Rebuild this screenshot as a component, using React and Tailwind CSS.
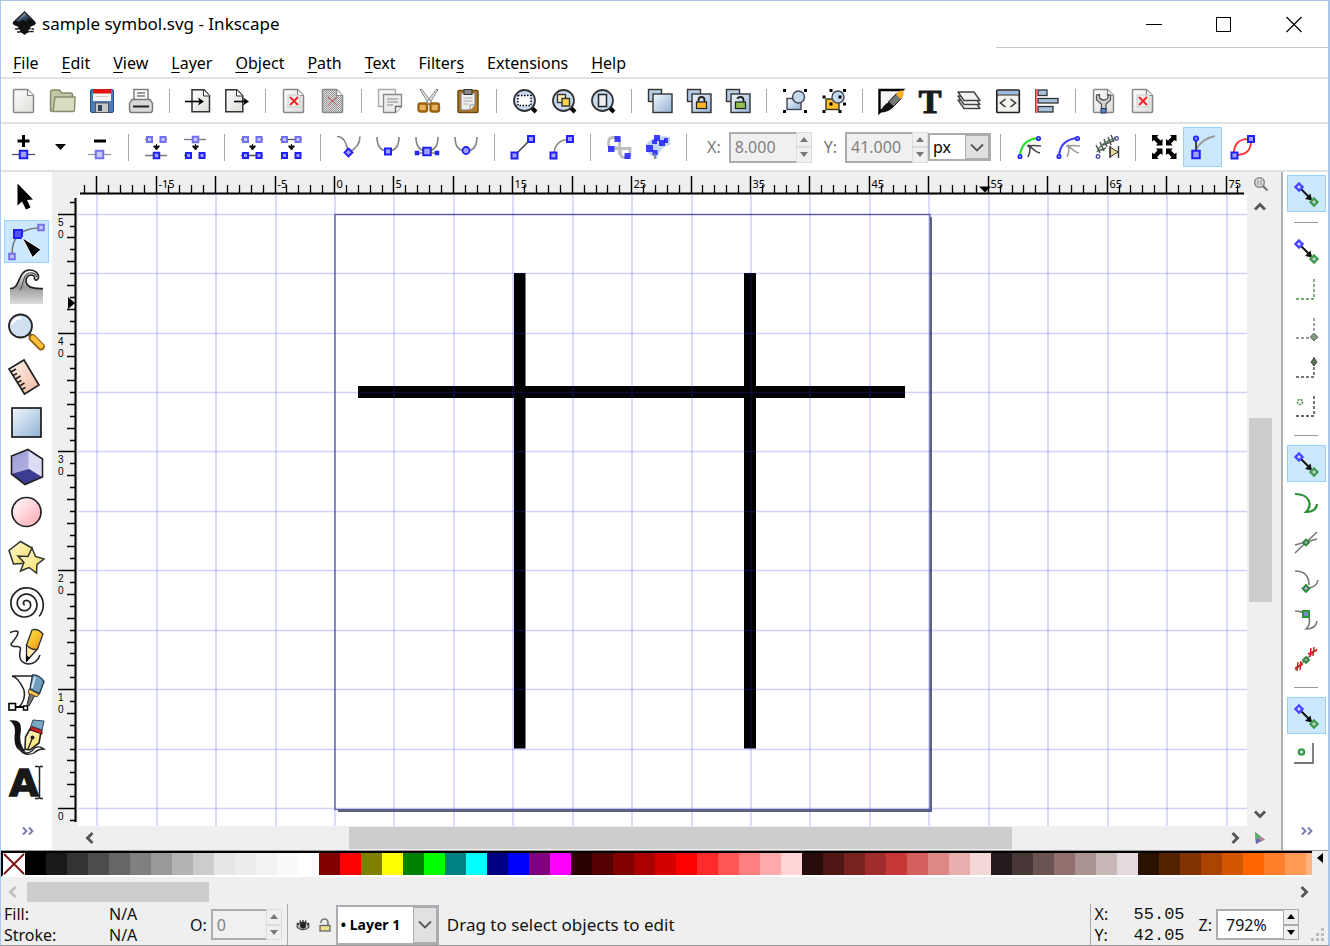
import React from "react";

const BLUE = "#2020ff";

/* ---------- small drawing helpers ---------- */

function Icon({ children, w = 24, h = 24 }) {
  return (
    <svg width={w} height={h} viewBox={`0 0 ${w} ${h}`} fill="none" className="block shrink-0 overflow-visible" aria-hidden="true">
      {children}
    </svg>
  );
}

function Node({ x, y, s = 5, pale }) {
  return <rect x={x - s / 2} y={y - s / 2} width={s} height={s} fill={pale ? "#c8c8ff" : "#a0a0ff"} stroke={pale ? "#7070f0" : BLUE} strokeWidth="2" />;
}

function Down({ x, y }) {
  return <path d={`M${x} ${y}v3M${x - 3} ${y + 2}h6l-3 4z`} fill="#111" stroke="#111" strokeWidth="1" />;
}

function Page({ children, stroke = "#888", fill = "url(#pg)" }) {
  return (
    <>
      <path d="M2.500.5h13l6 6v16q0 1-1 1h-18q-1 0-1-1v-21q0-1 1-1z" fill={fill} stroke={stroke} strokeWidth="1.500" />
      <path d="M15.500 1v5.500h6" fill="#fff" stroke={stroke} strokeWidth="1.200" />
      {children}
    </>
  );
}

function Defs() {
  return (
    <svg width="0" height="0" className="absolute" aria-hidden="true">
      <defs>
        <linearGradient id="pg" x1="0" y1="0" x2="1" y2="1"><stop offset="0" stopColor="#fff" /><stop offset="1" stopColor="#dcdcd8" /></linearGradient>
        <linearGradient id="bl" x1="0" y1="0" x2="1" y2="1"><stop offset="0" stopColor="#f4f8fc" /><stop offset="1" stopColor="#8fb2d6" /></linearGradient>
        <linearGradient id="pk" x1="0" y1="0" x2="1" y2="1"><stop offset="0" stopColor="#fff" /><stop offset="1" stopColor="#ffa6b0" /></linearGradient>
        <linearGradient id="ye" x1="0" y1="0" x2="1" y2="1"><stop offset="0" stopColor="#fffbe0" /><stop offset="1" stopColor="#f8dc58" /></linearGradient>
        <linearGradient id="or" x1="0" y1="0" x2="1" y2="1"><stop offset="0" stopColor="#fff04a" /><stop offset="1" stopColor="#f08a10" /></linearGradient>
        <linearGradient id="gr" x1="0" y1="0" x2="0" y2="1"><stop offset="0" stopColor="#fff" /><stop offset="0.500" stopColor="#999" /><stop offset="1" stopColor="#ddd" /></linearGradient>
        <linearGradient id="sk" x1="0" y1="0" x2="1" y2="1"><stop offset="0" stopColor="#fff4ee" /><stop offset="1" stopColor="#f0b8a0" /></linearGradient>
        <linearGradient id="bx" x1="0" y1="0" x2="1" y2="1"><stop offset="0" stopColor="#9a9ad4" /><stop offset="1" stopColor="#c4c4ec" /></linearGradient>
        <linearGradient id="logo" x1="0" y1="0" x2="1" y2="1"><stop offset="0" stopColor="#dfe9f5" /><stop offset="0.500" stopColor="#3c4d66" /><stop offset="1" stopColor="#000" /></linearGradient>
        <pattern id="mesh" width="2" height="2" patternUnits="userSpaceOnUse"><rect width="2" height="2" fill="#ddd" /><rect width="1" height="1" fill="#999" /><rect x="1" y="1" width="1" height="1" fill="#999" /></pattern>
      </defs>
    </svg>
  );
}

/* ---------- command bar icons ---------- */

const RedX = () => (
  <>
    <rect x="6" y="6" width="12" height="12" fill="#eee" stroke="#ccc" />
    <path d="M8 8l8 8M16 8l-8 8" stroke="#f02020" strokeWidth="1.800" />
  </>
);

const Lens = ({ children }) => (
  <>
    <path d="M18 18l5 5" stroke="#000" strokeWidth="4" />
    <circle cx="11.500" cy="11.500" r="10.500" fill="#c9dcf0" stroke="#333" strokeWidth="1.800" />
    {children}
  </>
);

const TwoSquares = ({ children }) => (
  <>
    <rect x=".5" y=".5" width="13" height="12" fill="#b8cde4" stroke="#333" strokeWidth="1.400" />
    <rect x="5" y="5" width="19" height="18.500" fill="url(#bl)" stroke="#333" strokeWidth="1.400" />
    {children}
  </>
);

const Corners = ({ a, b, c, d }) => (
  <g fill="#000">
    {[[a, b], [c, b], [a, d], [c, d]].map(([x, y]) => <rect key={`${x}-${y}`} x={x - 1.5} y={y - 1.5} width="3" height="3" />)}
  </g>
);

const commands = [
  ["New", <Page key="i" />],
  ["Open", <g key="i" stroke="#868a6a" strokeWidth="1.400"><path d="M-.5 3q0-2 2-2h7l2 3h9q2 0 2 2v16h-22z" fill="#c3c7a4" /><path d="M3 8h20l-.5 13q0 1.500-1.500 1.500h-20z" fill="#d9dcc0" transform="translate(1 0)" /></g>],
  ["Save", <g key="i"><rect x=".5" y=".5" width="23" height="23" rx="1.500" fill="#4c7cba" stroke="#2c4c80" /><rect x="3" y="0" width="18" height="12" fill="#f6f6f6" /><rect x="3" y="0" width="18" height="4.500" fill="#dd1515" /><path d="M6 7.500h12" stroke="#ccc" /><rect x="5.500" y="14" width="13" height="9.500" fill="#c8c8c8" stroke="#555" /><rect x="8" y="16" width="4" height="6" fill="#345" /></g>],
  ["Print", <g key="i" stroke="#777" strokeWidth="1.400"><rect x="5" y=".5" width="14" height="12" fill="#fff" /><path d="M8 4h8M8 7h8" /><path d="M3 10.500h18l2.500 4v6q0 3-2 3h-19q-2 0-2-3v-6z" fill="#d8d8d8" /><path d="M4 17.500h16" stroke="#222" strokeWidth="2" /></g>],
  null,
  ["Import", <g key="i"><path d="M6 .8h12l5.500 6v16H6z" fill="url(#pg)" stroke="#333" strokeWidth="1.500" /><path d="M17.500 1v6h6" fill="#fff" stroke="#333" /><path d="M-1 12.500h16" stroke="#000" strokeWidth="1.600" /><path d="M12 8.500l6 4-6 4 1.500-4z" fill="#000" /></g>],
  ["Export", <g key="i"><path d="M.8.8h11l6 6v16h-17z" fill="url(#pg)" stroke="#333" strokeWidth="1.500" /><path d="M11.500 1v6h6" fill="#fff" stroke="#333" /><path d="M9 12.500h11" stroke="#000" strokeWidth="1.600" /><path d="M18 8.500l6 4-6 4 1.500-4z" fill="#000" /></g>],
  null,
  ["Undo", <Page key="i"><RedX /></Page>],
  ["Redo", <Page key="i" fill="url(#mesh)"><path d="M7 8l9 8M16 8l-9 8" stroke="#c05050" /></Page>],
  null,
  ["Copy", <g key="i" stroke="#aaa" strokeWidth="1.300"><path d="M.5.500h17v17H.5z" fill="#f4f4f4" /><path d="M5.500 5.500h18v12l-6 6h-12z" fill="#ececec" stroke="#888" /><path d="M23.500 17.500h-6v6" fill="#fff" stroke="#666" /><path d="M9 10h11M9 13h11M9 16h6" /></g>],
  ["Cut", <g key="i"><path d="M3 .5l2 0 11 15h-4zM21 .5l-2 0L8 15.500h4z" fill="#e4e4e4" stroke="#888" /><rect x="1.500" y="14.500" width="8.500" height="8" rx="2" fill="#e8b060" stroke="#9a6410" strokeWidth="2.400" /><rect x="13.500" y="14.500" width="8.500" height="8" rx="2" fill="#e8b060" stroke="#9a6410" strokeWidth="2.400" /></g>],
  ["Paste", <g key="i"><rect x="2" y="1.500" width="20" height="22" rx="1" fill="#b07a2a" stroke="#6e4810" strokeWidth="1.500" /><path d="M5 4h14v12l-5 5H5z" fill="#efefef" stroke="#777" /><path d="M7.500 9h9M7.500 12h9M7.500 15h5" stroke="#aaa" /><path d="M14 21v-5h5" fill="#fff" stroke="#888" /><rect x="8" y=".5" width="8" height="5" fill="#888" stroke="#333" /></g>],
  null,
  ["Zoom to selection", <Lens key="i"><rect x="5" y="6.500" width="13" height="10" fill="#fff" stroke="#000" strokeWidth="1.400" strokeDasharray="1.500 1.500" /></Lens>],
  ["Zoom to drawing", <Lens key="i"><rect x="5.500" y="5.500" width="8" height="8" fill="#fff0b0" stroke="#333" strokeWidth="1.400" /><rect x="10" y="9.500" width="7.500" height="7.500" fill="#ffd040" stroke="#333" strokeWidth="1.400" /></Lens>],
  ["Zoom to page", <Lens key="i"><rect x="7.500" y="5.500" width="8" height="12" fill="#eee" stroke="#222" strokeWidth="1.500" /></Lens>],
  null,
  ["Duplicate", <TwoSquares key="i" />],
  ["Clone", <TwoSquares key="i"><path d="M11.500 13v-2q0-3 3-3t3 3v2" stroke="#222" strokeWidth="1.800" /><rect x="9.500" y="13" width="10" height="6.500" fill="#ffb628" stroke="#222" strokeWidth="1.200" /></TwoSquares>],
  ["Unlink clone", <TwoSquares key="i"><path d="M11.500 10q0-2 3-2t3 3v2" stroke="#222" strokeWidth="1.800" /><rect x="9.500" y="13" width="10" height="6.500" fill="#8fc050" stroke="#222" strokeWidth="1.200" /></TwoSquares>],
  null,
  ["Group", <g key="i"><rect x="4" y="9.500" width="14" height="11" fill="url(#bl)" stroke="#445" strokeWidth="1.400" /><circle cx="15.500" cy="8" r="6" fill="#c5d8ee" stroke="#445" strokeWidth="1.400" /><Corners a={1.5} b={1.5} c={22.5} d={22.5} /></g>],
  ["Ungroup", <g key="i"><rect x="4" y="10" width="13" height="10.500" fill="#ffc030" stroke="#332" strokeWidth="1.400" /><circle cx="16" cy="8" r="6" fill="#c5d8ee" stroke="#445" strokeWidth="1.400" /><Corners a={2} b={8} c={18} d={22.500} /><Corners a={9} b={1.5} c={22.5} d={15} /></g>],
  null,
  ["Fill and stroke", <g key="i"><path d="M.5 1h23L.5 23.500z" fill="url(#pg)" stroke="#000" strokeWidth="2.400" /><path d="M1 23.500q4-9 9-10l5 4q-5 6-14 6z" fill="#111" /><path d="M9.500 13l8-8.500 5 4.500-8 8.500z" fill="#777" stroke="#111" /><path d="M17 5l4-3.500h3.500V7L21.500 10z" fill="#f8b020" /></g>],
  ["Text and font", <text key="i" x="12" y="23.500" textAnchor="middle" fill="#1a1a1a" stroke="#1a1a1a" strokeWidth="1.200" className="font-['Liberation_Serif',serif] text-[34px] font-bold">T</text>],
  ["Layers", <g key="i" fill="#f2f2f2" stroke="#444" strokeWidth="1.400" strokeLinejoin="round">{[11, 7, 3].map((o) => <path key={o} d={`M1 ${o}h16l6 8.500h-16z`} />)}</g>],
  ["XML editor", <g key="i"><rect x=".8" y="1" width="22.500" height="22.500" rx="1" fill="#f2f2ee" stroke="#222" strokeWidth="1.700" /><rect x="2" y="2" width="20" height="3.500" fill="#9bbce0" /><path d="M1 6h22" stroke="#222" /><path d="M9.500 10l-5 4 5 4M14.500 10l5 4-5 4" stroke="#333" strokeWidth="1.600" /></g>],
  ["Align", <g key="i"><path d="M.8 0v24" stroke="#e02020" strokeWidth="1.600" /><g fill="#a9c2de" stroke="#333" strokeWidth="1.300"><rect x="3" y="1" width="9" height="5.500" /><rect x="3" y="9.500" width="20" height="4.500" /><rect x="3" y="17.500" width="15" height="5.500" /></g></g>],
  null,
  ["Preferences", <Page key="i"><path d="M4.500 6v5l5 4v6h4.500v-6l4.500-4V6l-2.500-.5V9q-1 2-4 2t-4.500-2V5.500z" fill="#d4d4d4" stroke="#555" strokeWidth="1.300" /><path d="M9 19.500h5V24H9z" fill="#5588cc" stroke="#235" /></Page>],
  ["Document properties", <Page key="i"><RedX /></Page>],
];

/* ---------- node tool bar icons ---------- */

const diagonal = "M0 0h6.500L5 2l3.500 3.500 2-1.500V10.500H4l1.500-2L2 5 0 6.500z";

const nodeTools = [
  ["Insert node", <g key="i"><path d="M11.500 0v12M5.500 6h12" stroke="#000" strokeWidth="3" /><path d="M0 19.500h23" stroke="#555" strokeWidth="1.300" /><Node x={11.5} y={19.5} s={7.5} /></g>],
  "arrow",
  ["Delete node", <g key="i"><path d="M6 6h12" stroke="#000" strokeWidth="3" /><path d="M0 19.500h23" stroke="#999" strokeWidth="1.300" /><Node x={11.5} y={19.5} s={7.5} pale /></g>],
  null,
  ["Join nodes", <g key="i"><path d="M0 4.500h4M18 4.500h4M0 20.500h22" stroke="#777" strokeWidth="1.300" /><Node x={4.5} y={4.5} s={5} pale /><Node x={18} y={4.5} s={5} pale /><Down x={11.5} y={9} /><Node x={11.5} y={20.5} s={5.5} /></g>],
  ["Break path", <g key="i"><path d="M0 4.500h22" stroke="#777" strokeWidth="1.300" /><Node x={11.5} y={4.5} s={5.5} pale /><Down x={11.5} y={9} /><path d="M0 20.500h4M18 20.500h4" stroke="#777" strokeWidth="1.300" /><Node x={4.5} y={20.5} /><Node x={18} y={20.5} /></g>],
  null,
  ["Join with segment", <g key="i"><path d="M0 4.500h4M18 4.500h4M0 20.500h22" stroke="#555" strokeWidth="1.300" /><Node x={4.5} y={4.5} pale /><Node x={18} y={4.5} pale /><Down x={11.5} y={9} /><Node x={4.5} y={20.5} /><Node x={18} y={20.5} /></g>],
  ["Delete segment", <g key="i"><path d="M0 4.500h22" stroke="#555" strokeWidth="1.300" /><Node x={4.5} y={4.5} pale /><Node x={18} y={4.5} pale /><Down x={11.5} y={9} /><Node x={4.5} y={20.5} /><Node x={18} y={20.5} /></g>],
  null,
  ["Make corner", <g key="i"><path d="M0 1.500q9 0 11 16 12-5 12-16" stroke="#888" strokeWidth="1.700" /><path d="M11.500 13.500l4 4-4 4-4-4z" fill="#a0a0ff" stroke={BLUE} strokeWidth="1.800" /></g>],
  ["Make smooth", <g key="i"><path d="M1 2q0 14 11 14t11-14" stroke="#888" strokeWidth="1.700" /><Node x={12} y={16.5} s={6} /></g>],
  ["Make symmetric", <g key="i"><path d="M1 2q0 14 11 14t11-14M2 18h20" stroke="#888" strokeWidth="1.700" /><Node x={12} y={16.5} s={7.5} /><Node x={2} y={18} s={2.5} /><Node x={22} y={18} s={2.5} /></g>],
  ["Make auto smooth", <g key="i"><path d="M1 2q0 14 11 14t11-14" stroke="#888" strokeWidth="1.700" /><circle cx="12" cy="15.500" r="3.500" fill="#a0a0ff" stroke={BLUE} strokeWidth="1.800" /></g>],
  null,
  ["Make line", <g key="i"><path d="M4 20L20 4" stroke="#444" strokeWidth="1.600" /><Node x={3.5} y={20.5} s={6} /><Node x={20} y={4} s={6} /></g>],
  ["Make curve", <g key="i"><path d="M4 20Q4 5 20 4" stroke="#888" strokeWidth="1.600" /><Node x={3.5} y={20.5} s={6} /><Node x={20} y={4} s={6} /></g>],
  null,
  ["Object to path", <g key="i"><path d="M10 2.500H5Q1.500 3 1.500 8t4 5h6q2 0 2 5t5 4.500h5M12.500 2.500v17M5 13.500h18v8" stroke="#bdbdbd" strokeWidth="2.800" /><g fill={BLUE} fillOpacity=".85"><rect x="7.500" y="1" width="6" height="6" /><rect x="1" y="11" width="6.500" height="6" /><rect x="17.500" y="18" width="6" height="6" /></g></g>],
  ["Stroke to path", <g key="i"><path d="M0 10Q6-1 24 2v8q-10 1-13 14-6-2-10-8z" fill="#c0d4ec" /><g fill={BLUE} fillOpacity=".85"><rect x="8" y="0" width="6" height="6" /><rect x="0" y="10" width="7" height="7" /><rect x="13" y="5" width="6" height="6" /><rect x="6.500" y="15" width="5" height="5" /><rect x="18" y="3" width="4" height="5" /><rect x="6" y="5" width="5" height="4" /></g><path d="M9 18v6" stroke="#777" strokeWidth="1.500" /></g>],
  null,
];

const Tweaked = ({ c, g }) => (
  <>
    <path d="M2 21Q3 5 20 3" stroke={c} strokeWidth="2.200" />
    <path d="M10 22q4-9 0-12M9 11q6-1 14 0M11 10q6 7 11 8" stroke={g} strokeWidth="1.600" />
    <circle cx="2" cy="21.500" r="1.800" fill="#aaf" stroke={BLUE} strokeWidth="1.500" />
    <circle cx="20.500" cy="3.500" r="1.800" fill="#aaf" stroke={BLUE} strokeWidth="1.500" />
  </>
);

const nodeToolsRight = [
  ["Edit clip path", <g key="i" transform="translate(1 0)"><Tweaked c="#20e020" g="#444" /></g>],
  ["Edit mask", <g key="i" transform="translate(1 0)"><Tweaked c="#4040ff" g="#999" /></g>],
  ["Path effect parameter", <g key="i" transform="translate(1 0)"><path d="M1 17Q5 7 20 3" stroke="#5a9a5a" strokeWidth="1.600" /><path d="M0 10l4 8M4 7l4 9M8 4l3 8M12 2l3 8M15 0l3 7M2 16l8-3M7 10l10-4" stroke="#555" strokeWidth="1.500" /><path d="M14 12v10l8-5z" fill="#e8d890" stroke="#333" /><path d="M22.500 11v12M14 11v12" stroke="#333" strokeWidth="1.400" /><circle cx="2" cy="21.500" r="1.800" stroke="#4040a0" strokeWidth="1.300" /><circle cx="20.500" cy="3.500" r="1.800" stroke="#4040a0" strokeWidth="1.300" /></g>],
  null,
  ["Show transform handles", <g key="i" fill="#000"><path d={diagonal} /><path d={diagonal} transform="translate(24.500 0) scale(-1 1)" /><path d={diagonal} transform="translate(0 24) scale(1 -1)" /><path d={diagonal} transform="translate(24.500 24) scale(-1 -1)" /></g>],
  ["Show handles", <g key="i" transform="translate(1 0)"><path d="M4 15Q9 4 23 1" stroke="#999" strokeWidth="2" /><path d="M4 4v15" stroke="#444" strokeWidth="2" /><circle cx="4" cy="3.500" r="2.300" fill="#8080ff" stroke={BLUE} strokeWidth="1.600" /><Node x={4} y={19.5} s={7.5} /></g>, true],
  ["Show outline", <g key="i" transform="translate(1 0)"><path d="M3 20Q2 3 20 4Q21 21 3 20z" stroke="#ff3030" strokeWidth="1.800" /><Node x={3.5} y={20.5} s={6} /><Node x={20} y={4} s={6} /></g>],
];

/* ---------- toolbox icons ---------- */

const spiral = Array.from({ length: 100 }, (_, i) => {
  const f = i / 99;
  const a = ((42 - 990 * (1 - f)) * Math.PI) / 180;
  const r = 1 + 17.5 * f;
  return `${i ? "L" : "M"}${(21.5 + r * Math.cos(a)).toFixed(1)} ${(24 + r * Math.sin(a)).toFixed(1)}`;
}).join("");

const tools = [
  ["Select", <path key="i" d="M13.500 8.500V30.500L18 26.500 22 34.500 26.500 32.500 23 25 29 24.500z" fill="#000" />],
  ["Edit paths by nodes", <g key="i"><path d="M8 34Q8 9 34 8" stroke="#777" strokeWidth="1.500" /><Node x={37} y={7.5} s={5.5} pale /><Node x={8} y={36.5} s={5.5} pale /><rect x="10" y="10" width="8" height="8" fill="#5050ff" stroke={BLUE} strokeWidth="2" /><path d="M18 17.500L37 29.500 28.500 37.500z" fill="#000" stroke="#fff" strokeWidth="1" /></g>, true],
  ["Tweak", <g key="i"><path d="M6 23.500C17 24 13 6 25 5c7-.5 10 4 9.500 8q-2 4-4 1 .5-4-3.500-4c-4 0-5 4-5 7 1 5 8 7 17 6.500V39H6z" fill="url(#gr)" stroke="none" /><path d="M6 23.500C17 24 13 6 25 5c7-.5 10 4 9.500 8q-2 4-4 1 .5-4-3.500-4c-4 0-5 4-5 7 1 5 8 7 17 6.500" stroke="#222" strokeWidth="1.600" /><path d="M16 25c4-4 2-15 9-17 4-.5 7 1 7.500 4" stroke="#555" strokeWidth="1.200" /></g>],
  ["Zoom", <g key="i"><path d="M25 24l4 4" stroke="#777" strokeWidth="4" /><path d="M28.500 28l8.500 8.500" stroke="#8a5a10" strokeWidth="7.500" strokeLinecap="round" /><path d="M29 28l8 8" stroke="#ffbe3a" strokeWidth="5" strokeLinecap="round" /><circle cx="16.500" cy="16" r="11.500" fill="#cfe0f3" stroke="#222" strokeWidth="1.800" /><path d="M8 14q3-6 9-6" stroke="#fff" strokeWidth="2.500" /></g>],
  ["Measure", <g key="i"><path d="M20 5L35 30 20.500 39 5 14z" fill="url(#sk)" stroke="#222" strokeWidth="1.700" /><path d="M7 17l5-3M9 20.500l4-2M11.500 24l5-3M13.500 27.500l4-2M15.500 31l5-3M17.500 34.500l4-2" stroke="#222" strokeWidth="1.500" /></g>],
  ["Rectangle", <rect key="i" x="8" y="8" width="29" height="29" fill="url(#bl)" stroke="#111" strokeWidth="1.600" />],
  ["3D box", <g key="i"><path d="M24 4.500L38.500 14V32L21 39.500 7.500 29V11z" fill="url(#bx)" /><path d="M24.500 4.500V24L38 32V14z" fill="#dcdcf6" /><path d="M7.500 29L25 24 38 32 21 39.500z" fill="#3c3c90" /><path d="M24 4.500L38.500 14V32L21 39.500 7.500 29V11z" stroke="#222" strokeWidth="1.600" /></g>],
  ["Ellipse", <circle key="i" cx="22.500" cy="22" r="14.500" fill="url(#pk)" stroke="#222" strokeWidth="1.700" />],
  ["Star", <g key="i" fill="url(#ye)" stroke="#333" strokeWidth="1.500"><path d="M16.500 6.500L28 13 25 28 9.500 29 5 15.500z" /><path d="M28 13L31.500 21.500 40 24 33 29.500 32.500 38 25 32.500 16.500 36 20 27.500 14 21 24 21.500z" /></g>],
  ["Spiral", <path key="i" d={spiral} stroke="#222" strokeWidth="1.700" />],
  ["Pencil", <g key="i"><path d="M6 7.500q8-3 8 0T7 19q0 3 6 2.500 5 0 3 5-2 11 8 12.500 9 0 12-9" stroke="#222" strokeWidth="1.500" /><path d="M22.500 36V20l11 4z" fill="#ffe9b0" stroke="#222" strokeWidth="1.300" /><path d="M22.500 20L28 5q6-2 11 4l-5.500 15q-5 2-11-4z" fill="url(#or)" stroke="#333" strokeWidth="1.300" /><path d="M22 37v-7l4 3z" fill="#000" /></g>],
  ["Bezier", <g key="i"><path d="M29 6H8q6 1 12 14 2 10-5 17" stroke="#222" strokeWidth="1.500" /><path d="M12 37h8" stroke="#000" strokeWidth="2" /><rect x="5" y="33.500" width="6.500" height="6.500" fill="#fff" stroke="#000" strokeWidth="1.600" /><rect x="19.500" y="36" width="4" height="4" fill="#fff" stroke="#000" strokeWidth="1.500" /><path d="M26 22l5 3-6 11-2-1z" fill="#777" stroke="#222" /><path d="M25 19l10 5-2 3-9-4z" fill="#ffc848" stroke="#543" /><path d="M28.500 5q6-1 11.500 6.500L35.500 23.500 26 19z" fill="#6d9fbd" stroke="#234" strokeWidth="1.300" /><path d="M31 7l-3 11" stroke="#cfe4f0" strokeWidth="2" /></g>],
  ["Calligraphy", <g key="i"><path d="M5 5.500q13-2 12 9-3 15 5 22-14 1-11-20 0-8-6-11z" fill="#111" /><path d="M14 30q6 12 14 6 5-7 12-2-6 0-10 4-12 5-16-8z" fill="#fff" stroke="#222" strokeWidth="1.300" /><path d="M26 35l-5-1 .5-12L26 14l11 3-2 11z" fill="url(#ye)" stroke="#222" strokeWidth="1.600" /><path d="M24 34l4-10" stroke="#222" strokeWidth="1.300" /><circle cx="28.500" cy="22.500" r="2" fill="#222" /><path d="M27 11l11 4v4l-12-4z" fill="#c82020" stroke="#411" /><path d="M29 5l11 1-2 9-11-4z" fill="#7aa8c4" stroke="#345" /></g>],
  ["Text", <g key="i"><text x="20" y="36" textAnchor="middle" fill="#181818" stroke="#181818" strokeWidth="1.500" className="font-['DejaVu_Sans',sans-serif] text-[38px] font-bold">A</text><path d="M31 6.500h3.500l1 1 1-1H39M31 38.500h3.500l1-1 1 1H39M35.500 7.500v30" stroke="#222" strokeWidth="1.500" /></g>],
];

/* ---------- snap bar icons ---------- */

const SnapArrow = () => (
  <>
    <path d="M7 7l10 10" stroke="#111" strokeWidth="2" />
    <path d="M18 18.500l-7-1.500L16.500 11.500z" fill="#111" />
    <path d="M5 1.500l3.500 3.500-3.500 3.500-3.500-3.500z" fill="#d8d8ff" stroke="#4848ff" strokeWidth="2.400" />
    <path d="M20 16.500l3.500 3.500-3.500 3.500-3.500-3.500z" fill="#c8dcd0" stroke="#3f9a50" strokeWidth="2.400" />
  </>
);
const GNode = ({ x, y, r = 3 }) => <path d={`M${x} ${y - r}l${r} ${r}-${r} ${r}-${r}-${r}z`} fill="#b0a8d0" stroke="#2b8a35" strokeWidth="1.800" />;
const Dash = ({ c = "#999" }) => <path d="M20 1v20H0" stroke={c} strokeWidth="1.800" strokeDasharray="3 2" />;

const snaps = [
  ["Enable snapping", <SnapArrow key="i" />, true],
  null,
  ["Snap bounding boxes", <SnapArrow key="i" />],
  ["Snap to edges", <Dash key="i" c="#78a878" />],
  ["Snap to corners", <g key="i"><Dash /><path d="M20 16l4 4-4 4-4-4z" fill="#7a9a7a" stroke="#777" /></g>],
  ["Snap edge midpoints", <g key="i"><Dash c="#777" /><path d="M20 2l3 4-3 4-3-4z" fill="#557755" stroke="#444" /></g>],
  ["Snap box centers", <g key="i"><Dash c="#666" /><circle cx="6" cy="7" r="2.500" stroke="#4a8a4a" strokeWidth="1.600" strokeDasharray="2 1" /></g>],
  null,
  ["Snap nodes", <SnapArrow key="i" />, true],
  ["Snap to paths", <path key="i" d="M1 3q11 0 14 7 2 6-3 11 10 0 11-8" stroke="#2a9030" strokeWidth="2.200" />],
  ["Snap to intersections", <g key="i"><path d="M1 23L23 2M1 15l22-6" stroke="#777" strokeWidth="1.500" /><GNode x={12} y={12.5} /></g>],
  ["Snap cusp nodes", <g key="i"><path d="M1 2q14 0 14 14M14 19q9-1 10-8" stroke="#777" strokeWidth="1.600" /><GNode x={12} y={19.5} r={3.5} /></g>],
  ["Snap smooth nodes", <g key="i"><path d="M1 3q11 0 14 7 2 6-3 11 10 0 11-8" stroke="#777" strokeWidth="1.600" /><rect x="9" y="3" width="6" height="6" fill="#7a8ad0" stroke="#2b9a35" strokeWidth="2" /></g>],
  ["Snap line midpoints", <g key="i"><path d="M1 23L23 2" stroke="#777" strokeWidth="1.500" /><path d="M4 15l-1 9M7 14l-1 9M1 21l8-4M17 1l-1 9M20 0l-1 9M14 7l9-4" stroke="#d02020" strokeWidth="1.500" /><GNode x={12} y={13} /></g>],
  null,
  ["Snap others", <SnapArrow key="i" />, true],
  ["Snap to page", <g key="i"><path d="M19 0v20H0" stroke="#777" strokeWidth="1.800" /><circle cx="7.500" cy="9" r="2.800" fill="#cde" stroke="#2f9a40" strokeWidth="2" /></g>],
];

/* ---------- controls ---------- */

function BarButton({ item }) {
  const [label, art, active] = item;
  return (
    <button type="button" aria-label={label} className={`flex h-10 w-[39px] shrink-0 items-center border pl-[7px] ${active ? "border-[#99d1ff] bg-[#cce8ff]" : "border-transparent"}`}>
      <Icon>{art}</Icon>
    </button>
  );
}

function Sep({ tall }) {
  return <span className="flex w-[18px] shrink-0 justify-center"><span className={`w-px bg-[#a8a8a8] ${tall ? "h-[27px]" : "h-6"}`} /></span>;
}

function Steps({ name, muted }) {
  const fill = muted ? "#777" : "#000";
  const look = muted ? "border-[#dcdcdc] bg-[#f0f0f0]" : "border-[#acacac] bg-[#efefef]";
  return (
    <span className="flex w-4 flex-col">
      <button type="button" aria-label={`Increase ${name}`} className={`flex flex-1 items-center justify-center border ${look}`}>
        <Icon w={8} h={5}><path d="M0 5h8L4 0z" fill={fill} /></Icon>
      </button>
      <button type="button" aria-label={`Decrease ${name}`} className={`flex flex-1 items-center justify-center border ${look}`}>
        <Icon w={8} h={5}><path d="M0 0h8L4 5z" fill={fill} /></Icon>
      </button>
    </span>
  );
}

function Spin({ id, label, value, width, muted }) {
  return (
    <span className={`flex items-center ${muted === "label" ? "gap-2" : "gap-1"}`}>
      <label htmlFor={id} className={muted === "label" ? "text-[#777]" : ""}>{label}</label>
      <span className="flex h-[31px]">
        <input id={id} type="text" defaultValue={value} disabled={Boolean(muted)} className={`${width} border-2 border-r-0 border-[#abadb3] ${muted ? "bg-[#f0f0f0] pl-1 text-[#808080]" : "bg-white pl-2"}`} />
        <Steps name={label} muted={Boolean(muted)} />
      </span>
    </span>
  );
}

function Combo({ label, value, className, bold }) {
  return (
    <span className={`relative flex border-2 border-[#abadb3] bg-white ${className}`}>
      <select aria-label={label} defaultValue={value} className={`w-full appearance-none bg-transparent pl-[3px] text-black ${bold ? "text-sm font-bold" : ""}`}>
        <option>{value}</option>
      </select>
      <span className="pointer-events-none absolute inset-y-0 right-0 flex w-6 items-center justify-center border border-[#acacac] bg-[#e1e1e1]">
        <Icon w={12} h={7}><path d="M0 .5l6 6 6-6" stroke="#555" strokeWidth="1.800" /></Icon>
      </span>
    </span>
  );
}

const chevrons = { up: "M1 8.500l5-5 5 5", down: "M1 3.500l5 5 5-5", left: "M8.500 1l-5 5 5 5", right: "M3.500 1l5 5-5 5" };
function Chevron({ dir, label, light }) {
  return (
    <button type="button" aria-label={label} className="flex h-6 w-6 shrink-0 items-center justify-center">
      <Icon w={12} h={12}><path d={chevrons[dir]} stroke={light ? "#bfbfbf" : "#555"} strokeWidth="2.800" /></Icon>
    </button>
  );
}

function More({ label }) {
  return (
    <button type="button" aria-label={label} className="flex h-6 w-10 items-center justify-center">
      <Icon w={12} h={8}><path d="M1 .5L4.500 4 1 7.500M7 .5L10.500 4 7 7.500" stroke="#7777b4" strokeWidth="1.800" /></Icon>
    </button>
  );
}

/* ---------- canvas and rulers ---------- */

const UNIT = 11.887;
const range = (a, b) => Array.from({ length: b - a + 1 }, (_, i) => a + i);

function TopRuler() {
  const x0 = 255;
  return (
    <svg width="100%" height="23" className="block" aria-label="Horizontal ruler" role="img">
      <path d="M0 21.500H4000" stroke="#000" strokeWidth="2" />
      {range(-21, 76).map((u) => {
        const x = Math.round(x0 + u * UNIT) - 0.5;
        const major = u % 5 === 0;
        return (
          <g key={u}>
            <path d={`M${x} ${major ? 4 : 13}V21`} stroke="#000" strokeWidth={major ? 1.5 : 1.3} />
            {major && (u === 0 || u % 10 !== 0) && <text x={x + 2} y="16" className="text-[11px]">{u}</text>}
          </g>
        );
      })}
      <path d="M899 14.500h12l-6 6z" fill="#000" />
    </svg>
  );
}

function SideRuler() {
  const y0 = 636;
  return (
    <svg width="25" height="100%" className="block" aria-label="Vertical ruler" role="img">
      <path d="M23.500 26V650" stroke="#000" strokeWidth="2" />
      {range(-1, 51).map((u) => {
        const y = Math.round(y0 - u * UNIT) + 0.5;
        const major = u % 10 === 0;
        return (
          <g key={u}>
            <path d={`M${major ? 6 : u % 2 === 0 ? 15 : 18} ${y}H23`} stroke="#000" strokeWidth="1.500" />
            {major && String(u).split("").map((d, i) => <text key={i} x="6" y={y + 11 + i * 12} className="font-['Liberation_Sans',sans-serif] text-[10px]">{d}</text>)}
          </g>
        );
      })}
      <path d="M16 125v12l7-6z" fill="#000" />
    </svg>
  );
}

function Canvas() {
  const gx = (u) => Math.round(257 + u * UNIT);
  const gy = (u) => Math.round(614 - u * UNIT) - 0.5;
  return (
    <svg width="100%" height="100%" className="block bg-white" role="img" aria-label="Drawing with two vertical bars and one horizontal bar">
      <path d="M852.500 22V615.500H260" stroke="#60607c" strokeWidth="3" fill="none" />
      <rect x="257" y="19.500" width="595" height="595" fill="#fff" stroke="#65658a" strokeWidth="1.300" />
      <rect x="436" y="78" width="11.500" height="475.500" />
      <rect x="666" y="78" width="12" height="475.500" />
      <rect x="280" y="191" width="547" height="12" />
      <g stroke="#3333ff" strokeOpacity=".22" strokeWidth="1.600">
        {range(-4, 15).map((k) => <path key={k} d={`M${gx(k * 5)} 0V4000`} />)}
        {range(0, 10).map((k) => <path key={k} d={`M0 ${gy(k * 5)}H4000`} />)}
      </g>
    </svg>
  );
}

/* ---------- palette ---------- */

const palette = (
  "000000 1a1a1a 333333 4d4d4d 666666 808080 999999 b3b3b3 cccccc e6e6e6 ececec f2f2f2 f9f9f9 ffffff " +
  "800000 ff0000 808000 ffff00 008000 00ff00 008080 00ffff 000080 0000ff 800080 ff00ff " +
  "2b0000 550000 800000 aa0000 d40000 ff0000 ff2a2a ff5555 ff8080 ffaaaa ffd5d5 " +
  "280b0b 501616 782121 a02c2c c83737 d35f5f de8787 e9afaf f4d7d7 " +
  "241c1c 483737 6c5353 916f6f ac9393 c8b7b7 e3dbdb " +
  "2b1100 552200 803300 aa4400 d45500 ff6600 ff7f2a ff9955 ffb380"
).split(" ");

const menus = [["", "F", "ile"], ["", "E", "dit"], ["", "V", "iew"], ["", "L", "ayer"], ["", "O", "bject"], ["", "P", "ath"], ["", "T", "ext"], ["Filter", "s", ""], ["Exte", "n", "sions"], ["", "H", "elp"]];

export default function App() {
  return (
    <div className="flex min-h-screen flex-col border border-r-2 border-b-[#999] border-[#a9c7e8] bg-[#efefef] font-['Noto_Sans','Open_Sans',sans-serif] text-base leading-5 text-[#111]">
      <Defs />

      <header className="bg-white">
        <div className="flex h-[46px] items-center pl-3">
          <Icon>
            <path d="M11.500-1L22.500 10q1 2-1 3l-4.500 2 1 2-3 1 2 2-3 1-2.500 2-2.500-2-3-1 1.500-2-3-1 1-2-4.500-2q-2-1-1-3z" fill="#111" />
            <path d="M11.500.5L20 9l-5-1.500-2 3-3-3-3 2-4-.5z" fill="url(#logo)" />
            <path d="M2 17h3M18.500 17h2.500M4 20h3M16.500 19.500h4" stroke="#222" strokeWidth="1.600" />
          </Icon>
          <h1 className="ml-[5px] text-[17px] text-black">sample symbol.svg - Inkscape</h1>
          <div className="ml-auto flex items-center gap-[54px] pr-[26px]">
            <button type="button" aria-label="Minimize"><Icon w={16} h={16}><path d="M0 8.500h16" stroke="#000" /></Icon></button>
            <button type="button" aria-label="Maximize"><Icon w={16} h={16}><rect x=".5" y="1.500" width="14" height="14" stroke="#000" /></Icon></button>
            <button type="button" aria-label="Close"><Icon w={16} h={16}><path d="M.5 1l15 15M15.500 1l-15 15" stroke="#000" strokeWidth="1.200" /></Icon></button>
          </div>
        </div>
        <div className="ml-auto h-px w-1/4 bg-[#c8c8c8]" />
        <nav className="flex h-[31px] items-center gap-[23px] border-b-2 border-[#e2e2e2] pl-3">
          {menus.map(([a, k, b]) => (
            <button type="button" key={a + k + b} className="text-black">{a}<span className="underline underline-offset-3">{k}</span>{b}</button>
          ))}
        </nav>
        <div role="toolbar" aria-label="Commands" className="flex h-[45px] items-center border-b-2 border-[#e2e2e2] pl-[3px]">
          {commands.map((c, i) => (c ? <BarButton key={i} item={c} /> : <Sep key={i} />))}
        </div>
        <div role="toolbar" aria-label="Node tool" className="flex h-12 items-center border-b-2 border-[#e2e2e2] pl-[3px]">
          {nodeTools.map((c, i) => {
            if (!c) return <Sep key={i} tall />;
            if (c === "arrow") return <button key={i} type="button" aria-label="More insert options" className="flex h-10 w-[37px] items-center pl-3"><Icon w={11} h={6}><path d="M0 0h11L5.500 6z" fill="#000" /></Icon></button>;
            return <BarButton key={i} item={c} />;
          })}
          <div className="flex items-center gap-3 pl-3">
            <Spin id="x" label="X:" value="8.000" width="w-[67px]" muted="label" />
            <Spin id="y" label="Y:" value="41.000" width="w-[67px]" muted="label" />
          </div>
          <Combo label="Unit" value="px" className="h-7 w-[63px]" />
          <Sep tall />
          {nodeToolsRight.map((c, i) => (c ? <BarButton key={i} item={c} /> : <Sep key={i} tall />))}
        </div>
      </header>

      <main className="flex min-h-0 flex-1">
        <div role="toolbar" aria-label="Tools" className="flex w-[51px] shrink-0 flex-col gap-[2px] bg-white pt-[3px] pl-[3px]">
          {tools.map(([label, art, active]) => (
            <button type="button" key={label} aria-label={label} className={`h-[43px] w-[45px] ${active ? "bg-[#cce8ff] outline -outline-offset-1 outline-[#99d1ff]" : ""}`}>
              <Icon w={45} h={43}>{art}</Icon>
            </button>
          ))}
          <div className="mt-auto pb-[7px] pl-1"><More label="More tools" /></div>
        </div>

        <div className="grid min-w-0 flex-1 grid-cols-[26px_1fr_34px] grid-rows-[23px_1fr_24px]">
          <div className="row-span-2"><SideRuler /></div>
          <div className="overflow-hidden pr-[3px] pl-[2px]"><TopRuler /></div>
          <button type="button" aria-label="Zoom if window is resized" className="flex items-center pl-[7px]">
            <Icon w={14} h={14}><circle cx="5.500" cy="5.500" r="4.800" fill="#ddd" stroke="#888" strokeWidth="1.500" /><path d="M9 9l4.500 4.500" stroke="#777" strokeWidth="2.200" /><path d="M4 3v5M7 3v5" stroke="#888" /></Icon>
          </button>
          <Canvas />
          <div className="flex flex-col items-start pl-px">
            <Chevron dir="up" label="Scroll up" />
            <div className="flex w-6 flex-1 flex-col">
              <div className="flex-[199]" />
              <div className="ml-px w-[23px] flex-[184] bg-[#cdcdcd]" />
              <div className="flex-[200]" />
            </div>
            <Chevron dir="down" label="Scroll down" />
          </div>
          <div />
          <div className="flex items-center">
            <Chevron dir="left" label="Scroll left" />
            <div className="flex h-[22px] flex-1">
              <div className="flex-[247]" />
              <div className="flex-[663] bg-[#cdcdcd]" />
              <div className="flex-[211]" />
            </div>
            <Chevron dir="right" label="Scroll right" />
          </div>
          <button type="button" aria-label="Color management" className="flex items-center pl-[7px]">
            <Icon w={12} h={12}><path d="M1 0l10 7.500L2 12z" fill="#999" /><path d="M1 0l6 4.500L1.500 8z" fill="#5fa870" /><path d="M1.500 7.500l3.500-1 2 2.500L2 12z" fill="#6a6ab0" /><path d="M7 5l4 2.500L7 9.500z" fill="#c07a80" /></Icon>
          </button>
        </div>

        <div role="toolbar" aria-label="Snap controls" className="flex w-[47px] shrink-0 flex-col border-l-2 border-[#b0b0b0] bg-white pt-[2px] pl-1">
          {snaps.map((s, i) =>
            s ? (
              <button type="button" key={i} aria-label={s[0]} className={`my-px flex h-[37px] w-[39px] shrink-0 items-center border pl-[6px] ${s[2] ? "border-[#99d1ff] bg-[#cce8ff]" : "border-transparent"}`}>
                <Icon>{s[1]}</Icon>
              </button>
            ) : (
              <span key={i} className="flex h-[18px] items-center pl-[7px]"><span className="h-px w-6 bg-[#999]" /></span>
            )
          )}
          <div className="mt-auto pb-[7px]"><More label="More snap options" /></div>
        </div>
      </main>

      <section aria-label="Palette" className="flex h-[31px] items-start border-t border-[#999]">
        <div className="flex h-[26px] min-w-0 flex-1 overflow-hidden border-t-2 border-b-2 border-l-2 border-black border-b-white">
          <button type="button" aria-label="No color" className="h-[22px] w-[22px] shrink-0 bg-white">
            <Icon w={22} h={22}><path d="M1 1l20 20M21 1L1 21" stroke="#801010" strokeWidth="1.800" /></Icon>
          </button>
          {palette.map((c, i) => <button type="button" key={i} aria-label={`#${c}`} className="h-[22px] w-[21px] shrink-0" style={{ background: `#${c}` }} />)}
        </div>
        <button type="button" aria-label="Palette menu" className="flex h-[14px] w-4 items-center justify-center"><Icon w={6} h={10}><path d="M6 0v10L0 5z" fill="#000" /></Icon></button>
      </section>
      <div className="flex h-[22px] items-center">
        <Chevron dir="left" label="Scroll palette left" light />
        <div className="flex h-5 flex-1">
          <div className="ml-[2px] flex-[181] bg-[#cdcdcd]" />
          <div className="flex-[1080]" />
        </div>
        <div className="pr-3"><Chevron dir="right" label="Scroll palette right" /></div>
      </div>

      <footer className="flex h-[42px] items-center pt-px">
        <div className="grid w-[189px] grid-cols-[105px_1fr] pl-[3px] leading-[21px]">
          <span>Fill:</span><span>N/A</span>
          <span>Stroke:</span><span>N/A</span>
        </div>
        <Spin id="o" label="O:" value="0" width="w-[55px]" muted="field" />
        <span className="ml-[5px] h-full w-px bg-[#aaa]" />
        <button type="button" aria-label="Toggle layer visibility" className="ml-2"><Icon w={14} h={14}><ellipse cx="7" cy="8" rx="6" ry="3.500" fill="#bbb" stroke="#444" strokeWidth="1.300" /><circle cx="7" cy="7.500" r="3" fill="#222" /><path d="M1 5l1.500 2M4 2.500l1 2.500M7 2v2.500M10 2.500L9 5M13 5l-1.500 2" stroke="#333" strokeWidth="1.400" /></Icon></button>
        <button type="button" aria-label="Toggle layer lock" className="ml-2"><Icon w={14} h={14}><path d="M3 5q0-4 3.500-4t3.500 4v3" stroke="#777" strokeWidth="1.600" /><rect x="2" y="7.500" width="10" height="5.500" fill="#efe08a" stroke="#666" strokeWidth="1.300" /></Icon></button>
        <Combo label="Layer" value="• Layer 1" className="ml-1 h-10 w-[103px]" bold />
        <p className="ml-2 text-[17px]">Drag to select objects to edit</p>
        <div className="ml-auto flex h-full items-center border-l border-[#aaa] pl-1">
          <div className="grid grid-cols-[39px_1fr] leading-[21px]">
            <span>X:</span><span className="font-['Liberation_Mono',monospace] text-[17px]">55.05</span>
            <span>Y:</span><span className="font-['Liberation_Mono',monospace] text-[17px]">42.05</span>
          </div>
          <div className="pl-[14px]"><Spin id="z" label="Z:" value="792%" width="w-[67px]" /></div>
          <span className="w-[29px] self-end pb-1 pl-3">
            <Icon w={13} h={13}>{[[0, 10], [5, 10], [10, 10], [5, 5], [10, 5], [10, 0]].map(([x, y]) => <rect key={`${x}-${y}`} x={x} y={y} width="3" height="3" fill="#bdbdbd" />)}</Icon>
          </span>
        </div>
      </footer>
    </div>
  );
}
